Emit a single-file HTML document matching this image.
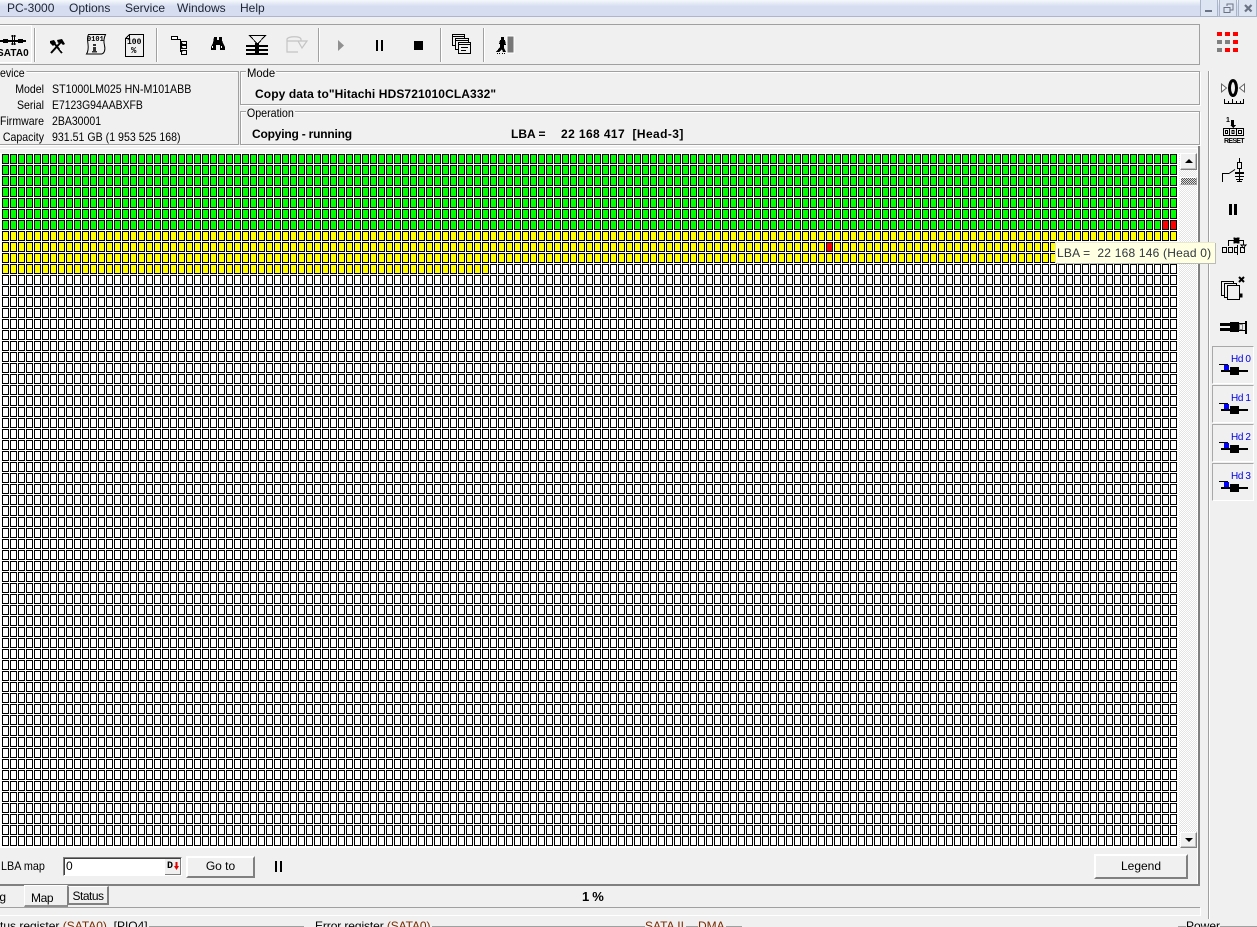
<!DOCTYPE html>
<html><head><meta charset="utf-8"><style>
html,body{margin:0;padding:0;width:1257px;height:927px;overflow:hidden;background:#f0f0f0}
body{position:relative;font-family:"Liberation Sans",sans-serif;font-size:12px;color:#000}
.t{position:absolute;white-space:pre;line-height:14px;height:14px}
.b{font-weight:bold}
.r{text-align:right}
.n{transform:scaleX(.88);transform-origin:0 0}
.r.n{transform-origin:100% 0}
.l{position:absolute;background:#a0a0a0}
.w{position:absolute;background:#fff}
.box{position:absolute;border:1px solid #a0a0a0;box-shadow:inset 1px 1px 0 #fff,1px 1px 0 #fff;box-sizing:border-box}
.btn{position:absolute;box-sizing:border-box;background:#f0f0f0;border-top:2px solid #fff;border-left:2px solid #fff;border-right:2px solid #808080;border-bottom:2px solid #808080;text-align:center;line-height:17px}
svg{position:absolute;overflow:visible}
.sep{position:absolute;width:1px;top:28px;height:34px;background:#a0a0a0;box-shadow:1px 0 0 #fff}
.hd{position:absolute;left:1212px;width:42px;height:38px;box-sizing:border-box;border:1px solid #a8a8a8;border-right:1px solid #fff;border-bottom:1px solid #fff}
.hd span{position:absolute;left:18px;top:7px;color:#0000e0;font-size:10px;line-height:12px;white-space:pre;letter-spacing:-.4px}
.x{position:absolute;top:0;height:17px;width:18px;box-sizing:border-box;border:1px solid #a8b4c8;border-top:0;background:#dde4f2}
.g{position:absolute;background-image:
repeating-linear-gradient(90deg,transparent 0 7px,#fff 7px 8px),
repeating-linear-gradient(180deg,transparent 0 10px,#fff 10px 11px),
repeating-linear-gradient(90deg,#000 0 1px,transparent 1px 6px,#000 6px 7px,transparent 7px 8px),
repeating-linear-gradient(180deg,#000 0 1px,transparent 1px 9px,#000 9px 10px,transparent 10px 11px)}
</style></head><body>
<!-- title bar -->
<div style="position:absolute;left:0;top:0;width:1257px;height:17px;background:linear-gradient(#f6f8fc,#d6ddf0 40%,#d6ddf0);border-bottom:1px solid #aeb6cf;box-sizing:border-box"></div>
<div class="t" style="left:7px;top:1px;color:#1c2433">PC-3000</div>
<div class="t" style="left:69px;top:1px;color:#1c2433">Options</div>
<div class="t" style="left:125px;top:1px;color:#1c2433">Service</div>
<div class="t" style="left:177px;top:1px;color:#1c2433">Windows</div>
<div class="t" style="left:240px;top:1px;color:#1c2433">Help</div>
<div class="x" style="left:1200px"></div><div class="x" style="left:1219px"></div><div class="x" style="left:1238px;width:19px"></div>
<svg style="left:1200px;top:0" width="57" height="17" shape-rendering="crispEdges"><path d="M5 10h7v2H5z" fill="#6a7384"/><path d="M24 7.500h6v5h-6zM24 7.500h6" fill="none" stroke="#6a7384"/><path d="M27 6V4h6v6h-3" fill="none" stroke="#6a7384" stroke-width="1.300"/></svg>
<svg style="left:1244px;top:4px" width="10" height="10"><path d="M1 1l6.500 6.500M7.500 1L1 7.500" stroke="#6a7384" stroke-width="2.200"/></svg>

<!-- toolbar -->
<div class="l" style="left:0;top:24px;width:1200px;height:1px"></div>
<div class="l" style="left:0;top:64px;width:1200px;height:1px"></div>
<div class="l" style="left:1199px;top:24px;width:1px;height:41px"></div>
<div class="w" style="left:0;top:25px;width:31px;height:1px"></div>
<div class="w" style="left:31px;top:25px;width:1px;height:38px"></div>
<div class="w" style="left:0;top:62px;width:32px;height:1px"></div>
<div class="sep" style="left:34px"></div>
<div class="sep" style="left:156px"></div>
<div class="sep" style="left:318px"></div>
<div class="sep" style="left:440px"></div>
<div class="sep" style="left:483px"></div>
<svg style="left:0;top:35px" width="30" height="14" shape-rendering="crispEdges"><path d="M0 5h26v2H0zM3 4h5v4H3zM18 4h5v4h-5z" fill="#000"/><path d="M12.500 0v10M14.500 0v10M11 1h5M11 9h5" stroke="#000" fill="none"/></svg>
<div class="t b" style="left:-3px;top:47px;font-size:10px;letter-spacing:.1px">SATA0</div>
<!-- tools -->
<svg style="left:48px;top:38px" width="18" height="18"><path d="M3 15L13 4M14 15L6 5" stroke="#000" stroke-width="2" fill="none"/><path d="M9 2l5-1 3 5-2 1-3-3-2 1zM2 3l4-1 2 3-3 3-3-3z" fill="#000"/><path d="M12 11l3 3" stroke="#fff"/></svg>
<!-- scroll -->
<svg style="left:84px;top:32px" width="23" height="26" fill="none" stroke="#000"><path d="M4.500 2.500h17c-2 4-2 7-1 11s0 8-3 8.500H2.500c2-3 2-6 1.500-10S3 5 4.500 2.500z"/></svg>
<div class="t" style="left:87px;top:33px;font-family:'Liberation Mono',monospace;font-size:7px;font-weight:bold">0101</div>
<svg style="left:92px;top:44px" width="6" height="9" shape-rendering="crispEdges"><path d="M1 0h3v2H1zM1 3h3v4H1zM0 7h5v1.500H0z" fill="#333"/></svg>
<!-- 100 doc -->
<svg style="left:125px;top:34px" width="20" height="24" shape-rendering="crispEdges" fill="none" stroke="#000"><path d="M4.500 .5h14v22H.5V4.500zM4.500 .5v4H.5"/></svg>
<div class="t b" style="left:127px;top:36px;font-family:'Liberation Mono',monospace;font-size:8px">100</div>
<div class="t b" style="left:131px;top:44px;font-family:'Liberation Mono',monospace;font-size:9px">%</div>
<!-- tree -->
<svg style="left:171px;top:36px" width="17" height="20" shape-rendering="crispEdges" fill="none" stroke="#000"><rect x=".5" y=".5" width="6" height="3" fill="#fff"/><path d="M6.500 3.500h3v12h2M9.500 7.500h2M9.500 11.500h2"/><rect x="10.500" y="5.500" width="5" height="3"/><rect x="10.500" y="9.500" width="5" height="3"/><rect x="10.500" y="14.500" width="5" height="4"/></svg>
<!-- binoculars -->
<svg style="left:210px;top:37px" width="16" height="14" shape-rendering="crispEdges"><path d="M4 0h3v3h2V0h3v3l1 3 2 4v3H10V8H6v5H1v-3l2-4z" fill="#000"/><path d="M2 9h1v2H2zM11 9h1v2h-1z" fill="#fff"/></svg>
<!-- filter -->
<svg style="left:246px;top:35px" width="23" height="20" shape-rendering="crispEdges"><path d="M3.500 .5h16L11.500 9z" fill="none" stroke="#000" stroke-width="1"/><path d="M0 10h22v2H0zM0 14h22v2H0zM0 18h22v2H0zM9 8h4v12H9z" fill="#000"/></svg>
<!-- disabled -->
<svg style="left:286px;top:36px" width="23" height="18" fill="none" stroke="#c4c4c4" stroke-width="1.200"><path d="M1 3c2-3 13-3 14 0v2H1zM1 5v11h11M15 5h6l-5 7-4-7"/></svg>
<!-- play pause stop -->
<svg style="left:338px;top:40px" width="8" height="12"><path d="M0 0l6 5.500-6 5.500z" fill="#909090"/></svg>
<svg style="left:376px;top:40px" width="8" height="12" shape-rendering="crispEdges"><path d="M0 0h2v11H0zM5 0h2v11H5z" fill="#000"/></svg>
<svg style="left:414px;top:40px" width="10" height="12" shape-rendering="crispEdges"><path d="M0 1h9v9H0z" fill="#000"/></svg>
<!-- windows -->
<svg style="left:452px;top:34px" width="20" height="21" shape-rendering="crispEdges" fill="#f0f0f0" stroke="#000"><rect x=".5" y=".5" width="12" height="11"/><path d="M1 2h11v1H1z" stroke="none" fill="#000"/><rect x="3.500" y="4.500" width="13" height="11"/><path d="M4 6h12v1H4z" stroke="none" fill="#000"/><rect x="6.500" y="8.500" width="12" height="11"/><path d="M7 10h11v1H7zM9 13h7v1H9zM9 16h5v1H9z" stroke="none" fill="#000"/></svg>
<!-- runner -->
<svg style="left:496px;top:36px" width="20" height="19" shape-rendering="crispEdges"><rect x="11" y="0" width="7" height="17" fill="#777" stroke="#fff"/><path d="M5 1h3v3H5zM4 4h5l1 5H8v3l2 4H7l-1-3-3 3H0l4-5V8H3z" fill="#000"/><path d="M1 17h1v1H1zM3 17h1v1H3zM6 17h1v1H6zM8 17h1v1H8z" fill="#000"/></svg>

<!-- device info -->
<div class="l" style="left:0;top:71px;width:238px;height:1px"></div>
<div class="w" style="left:0;top:72px;width:237px;height:1px"></div>
<div class="l" style="left:238px;top:71px;width:1px;height:74px"></div>
<div class="l" style="left:0;top:144px;width:239px;height:1px"></div>
<div class="w" style="left:0;top:145px;width:240px;height:1px"></div>
<div class="t n" style="left:0;top:66px;background:#f0f0f0;padding-right:2px">evice</div>
<div class="t r n" style="left:-20px;top:82px;width:64px">Model</div>
<div class="t r n" style="left:-20px;top:98px;width:64px">Serial</div>
<div class="t r n" style="left:-20px;top:114px;width:64px">Firmware</div>
<div class="t r n" style="left:-20px;top:130px;width:64px">Capacity</div>
<div class="t n" style="left:52px;top:82px;transform:scaleX(.885)">ST1000LM025 HN-M101ABB</div>
<div class="t n" style="left:52px;top:98px;transform:scaleX(.867)">E7123G94AABXFB</div>
<div class="t n" style="left:52px;top:114px;transform:scaleX(.875)">2BA30001</div>
<div class="t n" style="left:52px;top:130px;transform:scaleX(.884)">931.51 GB (1 953 525 168)</div>

<div class="box" style="left:240px;top:71px;width:960px;height:34px"></div>
<div class="t n" style="left:246px;top:66px;background:#f0f0f0;padding:0 1px;transform:scaleX(.94)">Mode</div>
<div class="t b" style="left:255px;top:87px;letter-spacing:.1px">Copy data to"Hitachi HDS721010CLA332"</div>
<div class="box" style="left:240px;top:111px;width:960px;height:34px"></div>
<div class="t n" style="left:246px;top:106px;background:#f0f0f0;padding:0 1px;transform:scaleX(.89)">Operation</div>
<div class="t b" style="left:252px;top:127px;letter-spacing:-.2px">Copying - running</div>
<div class="t b" style="left:511px;top:127px">LBA =</div>
<div class="t b" style="left:561px;top:127px;letter-spacing:.4px">22 168 417  [Head-3]</div>

<!-- grid -->
<div class="w" style="left:0;top:148px;width:1197px;height:1px"></div>
<div class="w" style="left:0;top:153px;width:1179px;height:695px"></div>
<div class="g" style="left:2px;top:154px;width:1176px;height:693px;background-color:#fff"></div>
<div class="g" style="left:2px;top:154px;width:1176px;height:77px;background-color:#00ff00"></div>
<div class="g" style="left:1162px;top:220px;width:16px;height:11px;background-color:#ff0000"></div>
<div class="g" style="left:2px;top:231px;width:1176px;height:33px;background-color:#ffff00"></div>
<div class="g" style="left:2px;top:264px;width:488px;height:11px;background-color:#ffff00"></div>
<div class="g" style="left:826px;top:242px;width:8px;height:11px;background-color:#ff0000"></div>

<!-- scrollbar -->
<div style="position:absolute;left:1179px;top:153px;width:18px;height:695px;background-color:#f4f4f4;background-image:repeating-conic-gradient(#e4e4e4 0 25%,#fff 0 50%);background-size:2px 2px"></div>
<div class="btn" style="left:1180px;top:153px;width:17px;height:17px;border-width:1px;box-shadow:inset -1px -1px 0 #c0c0c0"></div>
<svg style="left:1185px;top:159px" width="10" height="6"><path d="M4 0L8 4H0z" fill="#000"/></svg>
<div style="position:absolute;left:1180px;top:177px;width:17px;height:8px;box-sizing:border-box;border:1px solid #a0a0a0;border-top-color:#fff;border-left-color:#fff;background-image:repeating-conic-gradient(#555 0 25%,#ddd 0 50%);background-size:2px 2px"></div>
<div class="btn" style="left:1180px;top:832px;width:17px;height:16px;border-width:1px;box-shadow:inset -1px -1px 0 #c0c0c0"></div>
<svg style="left:1185px;top:838px" width="10" height="6"><path d="M0 0h8L4 4z" fill="#000"/></svg>

<!-- frame -->
<div class="w" style="left:1197px;top:148px;width:1px;height:736px"></div>
<div style="position:absolute;left:1198px;top:146px;width:2px;height:740px;background:#808080"></div>
<div style="position:absolute;left:0;top:884px;width:1200px;height:2px;background:#808080"></div>

<!-- tooltip -->
<div style="position:absolute;z-index:5;left:1055px;top:242px;width:160px;height:21px;box-sizing:border-box;background:#ffffe1;border-top:1px solid #e8e8d0;border-left:1px solid #e8e8d0;box-shadow:1px 1px 0 #bbb;line-height:20px;padding-left:1px;color:#30363f;white-space:pre;letter-spacing:.2px">LBA =  22 168 146 (Head 0)</div>

<!-- bottom controls -->
<div class="t n" style="left:1px;top:859px;transform:scaleX(.9)">LBA map</div>
<div style="position:absolute;left:63px;top:857px;width:119px;height:19px;box-sizing:border-box;background:#fff;border:1px solid #808080;border-right-color:#fff;border-bottom-color:#fff;box-shadow:inset 1px 1px 0 #404040"></div>
<div class="t" style="left:66px;top:859px">0</div>
<div style="position:absolute;left:165px;top:859px;width:16px;height:16px;box-sizing:border-box;background:#f0f0f0;border-right:1px solid #808080;border-bottom:1px solid #808080"></div>
<div class="t b" style="left:167px;top:860px;font-size:10px;font-family:'Liberation Mono',monospace">D</div>
<svg style="left:174px;top:862px" width="6" height="10"><path d="M1.500 0h2v4H5L2.500 8 0 4h1.500z" fill="#e00000"/></svg>
<div class="btn" style="left:186px;top:856px;width:69px;height:22px">Go to</div>
<svg style="left:275px;top:861px" width="8" height="12" shape-rendering="crispEdges"><path d="M0 0h2v11H0zM5 0h2v11H5z" fill="#000"/></svg>
<div class="btn" style="left:1094px;top:854px;width:94px;height:25px;line-height:20px">Legend</div>

<!-- tabs -->
<div class="t" style="left:-14px;top:890px">Log</div>
<div style="position:absolute;left:24px;top:885px;width:44px;height:22px;box-sizing:border-box;border-top:1px solid #fff;border-left:1px solid #fff;border-right:1px solid #808080;border-bottom:2px solid #909090;padding-left:6px;line-height:25px;background:#f0f0f0;letter-spacing:-.4px">Map</div>
<div style="position:absolute;left:68px;top:886px;width:41px;height:19px;box-sizing:border-box;border-top:1px solid #fff;border-left:1px solid #808080;border-right:2px solid #808080;border-bottom:2px solid #808080;text-align:center;line-height:18px;background:#f0f0f0;letter-spacing:-.5px">Status</div>
<div class="t b" style="left:582px;top:890px;font-size:13px;letter-spacing:-.3px">1 %</div>
<div class="l" style="left:0;top:907px;width:1200px;height:1px"></div>
<div class="w" style="left:0;top:915px;width:1201px;height:1px"></div>
<div class="w" style="left:1200px;top:908px;width:1px;height:8px"></div>

<!-- status -->
<div class="l" style="left:149px;top:926px;width:155px;height:1px"></div>
<div class="l" style="left:432px;top:926px;width:205px;height:1px"></div>
<div class="t" style="left:-18px;top:919px">Status register <span style="color:#7a2a00">(SATA0)</span>  [PIO4]</div>
<div class="t" style="left:315px;top:919px;letter-spacing:-.1px">Error register <span style="color:#7a2a00">(SATA0)</span></div>
<div class="l" style="left:637px;top:926px;width:8px;height:1px"></div>
<div class="t" style="left:645px;top:919px"><span style="color:#7a2a00">SATA II</span></div>
<div class="l" style="left:686px;top:926px;width:12px;height:1px"></div>
<div class="t" style="left:698px;top:919px"><span style="color:#7a2a00">DMA</span></div>
<div class="l" style="left:726px;top:926px;width:16px;height:1px"></div>
<div class="t" style="left:1186px;top:919px">Power</div>
<div class="l" style="left:1178px;top:926px;width:8px;height:1px"></div>
<div class="l" style="left:1220px;top:926px;width:37px;height:1px"></div>

<!-- right panel -->
<div class="l" style="left:1208px;top:71px;width:1px;height:848px"></div>
<div class="w" style="left:1209px;top:71px;width:1px;height:848px"></div>
<svg style="left:1217px;top:32px" width="24" height="22" shape-rendering="crispEdges">
<g fill="#ff0000"><rect width="5" height="4"/><rect x="8" width="5" height="4"/><rect x="16" width="5" height="4"/><rect x="16" y="8" width="5" height="4"/><rect x="8" y="16" width="5" height="4"/><rect x="16" y="16" width="5" height="4"/></g>
<g fill="#808080"><rect y="8" width="5" height="4"/><rect x="8" y="8" width="5" height="4"/><rect y="16" width="5" height="4"/></g></svg>
<!-- zero icon -->
<svg style="left:1221px;top:79px" width="24" height="27"><ellipse cx="12" cy="9" rx="3.500" ry="7.500" fill="none" stroke="#000" stroke-width="3"/><path d="M.5 5l5 4-5 4zM23.500 5l-5 4 5 4z" fill="#fff" stroke="#666"/><path d="M3.500 20v4.500h19V20M7.500 22v2M11.500 20v4M15.500 22v2M19.500 22v2" stroke="#000" fill="none" shape-rendering="crispEdges"/></svg>
<!-- reset -->
<div class="t b" style="left:1226px;top:117px;font-size:7px;line-height:8px;height:8px">1</div>
<svg style="left:1222px;top:120px" width="24" height="17" shape-rendering="crispEdges" fill="none" stroke="#000"><path d="M9 0h3v5h2l-3 3-3-3h1z" fill="#000" stroke="none"/><rect x="1.500" y="8.500" width="20" height="7"/><path d="M7.500 8v8M14.500 8v8"/><rect x="3.500" y="10.500" width="2" height="3"/><rect x="10" y="10.500" width="2" height="3"/><rect x="16.500" y="10.500" width="3" height="3"/></svg>
<div class="t b" style="left:1224px;top:137px;font-size:7px;line-height:9px;height:9px;letter-spacing:-.7px">RESET</div>
<!-- relay -->
<svg style="left:1221px;top:158px" width="24" height="26" shape-rendering="crispEdges" fill="none" stroke="#000"><path d="M18.500 0v4M18.500 10v14"/><rect x="16.500" y="4.500" width="4" height="6"/><path d="M14 14.500h9M14 15.500h9M14 18.500h9M15 21.500h7M16 23.500h5"/><path d="M1.500 24v-8.500H8" /><path d="M8 15.500l6-4" shape-rendering="auto"/></svg>
<svg style="left:1229px;top:204px" width="8" height="12" shape-rendering="crispEdges"><path d="M0 0h3v11H0zM5 0h3v11H5z" fill="#000"/></svg>
<!-- copy x -->
<svg style="left:1221px;top:236px;z-index:1" width="25" height="22" shape-rendering="crispEdges" fill="none" stroke="#000"><path d="M7.500 10V4.500h15V9M20 9h5l-2.500 3z"/><path d="M13 2h1l1 1 1-1h2v1l-1 1 1 1v2h-2l-1-1-1 1h-1V5l1-1-1-1z" fill="#000"/><rect x="1.500" y="11.500" width="4" height="5"/><rect x="7.500" y="11.500" width="4" height="5"/><rect x="13.500" y="11.500" width="3" height="5"/><path d="M16.500 9v10"/><rect x="19.500" y="11.500" width="4" height="5"/></svg>
<svg style="left:1221px;top:276px" width="26" height="24" shape-rendering="crispEdges" fill="#f0f0f0" stroke="#000"><rect x=".5" y="5.500" width="12" height="14"/><rect x="3.500" y="7.500" width="12" height="14"/><rect x="6.500" y="9.500" width="12" height="14"/><path d="M19 18h2v3h-2z" fill="#000"/><path d="M18 1l5 5M23 1l-5 5" stroke-width="2" shape-rendering="auto"/></svg>
<!-- connector -->
<svg style="left:1220px;top:321px" width="28" height="15" shape-rendering="crispEdges"><path d="M0 2h12v3H0zM0 7h12v3H0zM10 1h9v10h-9z" fill="#000"/><path d="M18 2.500h8M18 9.500h8" stroke="#000"/><path d="M25 0h2v13h-2z" fill="#000"/><path d="M19.500 3.500h3v5h-3z" fill="#f0f0f0" stroke="#888"/></svg>
<!-- heads -->
<div class="hd" style="top:346px"><span>Hd 0</span></div>
<div class="hd" style="top:385px"><span>Hd 1</span></div>
<div class="hd" style="top:424px"><span>Hd 2</span></div>
<div class="hd" style="top:463px"><span>Hd 3</span></div>
<svg style="left:1219px;top:364px" width="30" height="14" shape-rendering="crispEdges"><path d="M0 0h9v1H0zM2 6h27v2H2zM11 3h9v8h-9z" fill="#000"/><rect x="5" y="1" width="5" height="5" fill="#0000ff"/></svg>
<svg style="left:1219px;top:403px" width="30" height="14" shape-rendering="crispEdges"><path d="M0 0h9v1H0zM2 6h27v2H2zM11 3h9v8h-9z" fill="#000"/><rect x="5" y="1" width="5" height="5" fill="#0000ff"/></svg>
<svg style="left:1219px;top:442px" width="30" height="14" shape-rendering="crispEdges"><path d="M0 0h9v1H0zM2 6h27v2H2zM11 3h9v8h-9z" fill="#000"/><rect x="5" y="1" width="5" height="5" fill="#0000ff"/></svg>
<svg style="left:1219px;top:481px" width="30" height="14" shape-rendering="crispEdges"><path d="M0 0h9v1H0zM2 6h27v2H2zM11 3h9v8h-9z" fill="#000"/><rect x="5" y="1" width="5" height="5" fill="#0000ff"/></svg>
</body></html>
